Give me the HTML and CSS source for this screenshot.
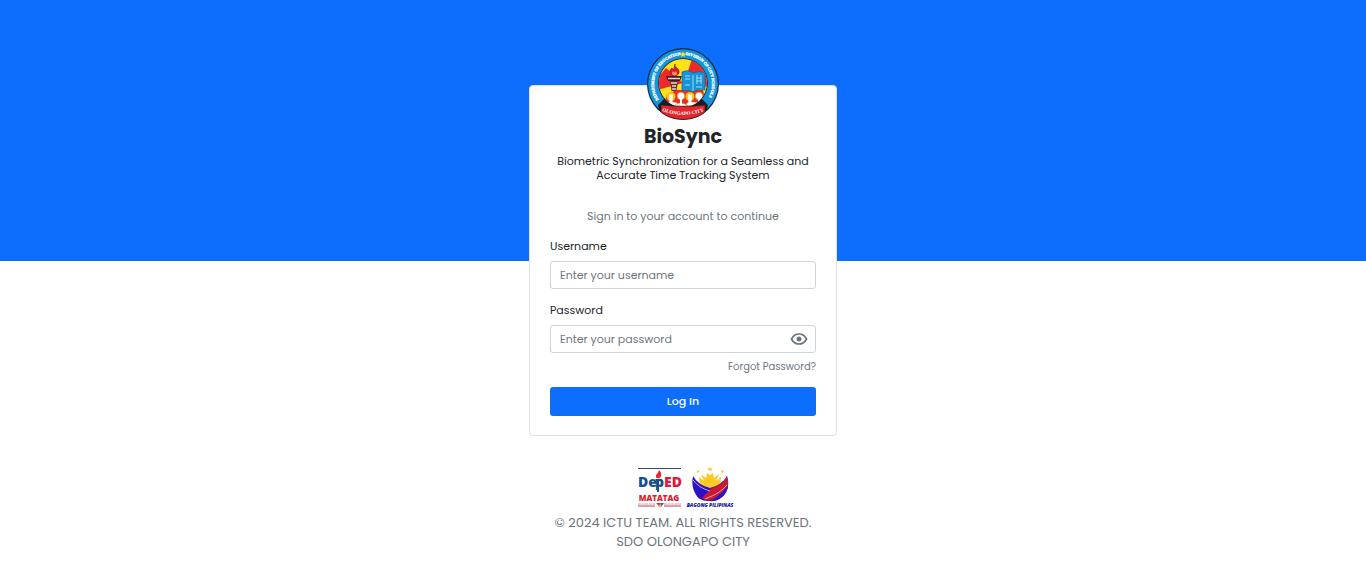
FILE: index.html
```html
<!DOCTYPE html>
<html lang="en">
<head>
<meta charset="utf-8">
<meta name="viewport" content="width=device-width, initial-scale=1">
<title>BioSync</title>
<link rel="stylesheet" href="styles.css">
</head>
<body>
<main class="page">
  <section class="card">
    <svg class="seal" viewBox="0 0 72 72" role="img" aria-label="Division of City Schools, Olongapo City">
      <defs>
        <path id="ring-left" d="M16 57A29 29 0 0 1 33.500 7.100"/>
        <path id="ring-right" d="M38.500 7.100A29 29 0 0 1 56 57"/>
        <path id="ring-bottom" d="M15 63Q36 71 57 63"/>
        <clipPath id="seal-inner"><circle cx="36" cy="35" r="24"/></clipPath>
      </defs>
      <circle cx="36" cy="36" r="36" fill="#102a3c"/>
      <circle cx="36" cy="36" r="34.800" fill="#1594dc"/>
      <path d="M11 57L18 50H54L61 57L60 62L52 68Q36 74 20 68L12 62Z" fill="#15202a"/>
      <circle cx="36" cy="35" r="24.800" fill="#123"/>
      <g clip-path="url(#seal-inner)">
        <path d="M0 0H72V72H0Z" fill="#ffe21a"/>
        <path d="M37 35L46 8H66V40Z" fill="#f0282d"/>
        <path d="M36 35L19 20L10 31V42Z" fill="#f0282d"/>
        <path d="M20 46L30 42L56 42L60 60H16Z" fill="#f0282d"/>
        <path d="M28 16C27 20 33 20 32 25Q30 29 26 28C21 26 23 21 25 20Q26 22 27 21Z" fill="#e5172b" stroke="#7e1820" stroke-width=".6"/>
        <path d="M26 27Q24 25 26 23Q27 26 29 23Q31 27 28 27.500Z" fill="#ff9a80"/>
        <path d="M19 28H35L33 33H21Z" fill="#342022"/>
        <path d="M23 33H31L29.500 43H24.500Z" fill="#6b302d"/>
        <path d="M21 30.500H33M24 35H30M25 38H29M25 41H29" stroke="#f5d3c6" stroke-width="1.500"/>
        <path d="M35 24Q41 21 46 25Q52 22 58 25V42Q51 40 46 44Q41 41 35 43Z" fill="#1595d8" stroke="#126398" stroke-width=".7"/>
        <path d="M38 28H43M38 31H43M38 37H43M49 30H55M49 33H55M50 27V36M54 27V36M49 39H55M46 27V43" stroke="#9bdcf5" stroke-width="1"/>
        <g stroke="#c77918" stroke-width=".5">
          <path d="M17 58Q17 54 22 54H27Q31 54 32 58ZM39 58Q39 54 43 54H47Q52 54 53 58Z" fill="#fff"/>
          <path d="M27 58Q29 55 33 55Q38 55 41 58Z" fill="#fff"/>
        </g>
        <g fill="#f4c80f"><circle cx="24" cy="48.500" r="4.500"/><circle cx="43" cy="48.500" r="4.500"/></g>
        <g fill="#fff" stroke="#d58b19" stroke-width=".7"><circle cx="34" cy="48" r="3.800"/><circle cx="52" cy="48" r="3.800"/></g>
        <path d="M22 46.500H26L25.500 55H22.500ZM41 46.500H45L44.500 55H41.500ZM33 51H35V56H33ZM51 51H53V56H51Z" fill="#fff"/>
      </g>
      <path d="M14 57Q36 60 58 57L58 64Q50 71 36 71.500Q22 71 14 64Z" fill="#e3262c" stroke="#31151a" stroke-width=".6"/>
      <path d="M36 3.200L36.900 5.300L39 5.500L37.400 6.900L38 9.100L36 7.900L34 9.100L34.600 6.900L33 5.500L35.100 5.300Z" fill="#ffe21a"/>
      <text class="seal-text"><textPath href="#ring-left" startOffset="100%" text-anchor="end">DEPARTMENT OF EDUCATION</textPath></text>
      <text class="seal-text"><textPath href="#ring-right">DIVISION OF CITY SCHOOLS</textPath></text>
      <text class="seal-city"><textPath href="#ring-bottom" startOffset="50%" text-anchor="middle">OLONGAPO CITY</textPath></text>
    </svg>
    <h1 class="title">BioSync</h1>
    <p class="subtitle">Biometric Synchronization for a Seamless and Accurate Time Tracking System</p>
    <p class="prompt">Sign in to your account to continue</p>
    <form class="form">
      <div class="field">
        <label class="label" for="username">Username</label>
        <input class="input" id="username" type="text" placeholder="Enter your username">
      </div>
      <div class="field">
        <label class="label" for="password">Password</label>
        <div class="password">
          <input class="input" id="password" type="password" placeholder="Enter your password">
          <button class="reveal" type="button" aria-label="Show password">
            <svg viewBox="0 0 18 14" width="18" height="14"><path d="M1.500 7C3.200 3.600 6 2 9 2S14.800 3.600 16.500 7C14.800 10.400 12 12 9 12S3.200 10.400 1.500 7Z" fill="none" stroke="#6c757d" stroke-width="1.700"/><circle cx="9" cy="7" r="2.500" fill="#6c757d"/></svg>
          </button>
        </div>
      </div>
      <a class="forgot" href="#">Forgot Password?</a>
      <button class="submit" type="submit">Log In</button>
    </form>
  </section>
  <footer class="footer">
    <div class="logos">
      <svg viewBox="0 0 44 42" width="44" height="42" role="img" aria-label="DepEd Matatag">
        <path d="M0 1.500H43" stroke="#2b4c7b" stroke-width="1.200"/>
        <text x="0" y="20" class="deped" fill="#14508f">De</text>
        <text x="17" y="20" class="deped" fill="#14508f">p</text>
        <text x="26" y="20" class="deped" fill="#dc1c38">ED</text>
        <path d="M21 3Q25 7 22 11Q17 12 18 8Q20 7 21 3Z" fill="#e42837"/>
        <path d="M17 12H24L22 14H19ZM19 13H21V25H19Z" fill="#14508f"/>
        <text x="21" y="34" text-anchor="middle" class="matatag" fill="#dc1c30">MATATAG</text>
        <path d="M0 37H17M26 37H43" stroke="#8294ac" stroke-width=".8" stroke-dasharray="3 .6"/>
        <path d="M0 39H17M26 39H43" stroke="#dc3444" stroke-width="1"/>
        <path d="M18 36H22V40Z" fill="#df3344"/><path d="M22 36H26L23 40Z" fill="#2864a7"/><circle cx="22" cy="39" r="1.500" fill="#f3b43b"/>
      </svg>
      <svg class="bagong-logo" viewBox="0 0 44 42" width="44" height="42" role="img" aria-label="Bagong Pilipinas">
        <path d="M11 10L16 14L13 7L18 11L19 6L22 8L25 6L26 11L31 7L28 14L33 10L32 22L22 24L12 22Z" fill="#ffc928"/>
        <path d="M22 0L23 1.500H25L23.500 2.500L24 4L22 3L20 4L20.500 2.500L19 1.500H21ZM9 4L11 3V5L9 6ZM34 3L36 4L35 6L33 5Z" fill="#f8c52b"/>
        <path d="M5 9Q10 18 22 21Q34 18 39 9Q43 22 35 29Q28 35 22 34Q11 35 7 26Q3 19 5 9Z" fill="#2c12c4"/>
        <path d="M39 9Q36 17 23 21.500Q20 25 14 31Q22 36 32 31Q43 24 39 9Z" fill="#c91932"/>
        <path d="M22 34Q31 30 40 18L37 27Q31 35 22 34Z" fill="#2c12c4"/>
        <path d="M5 13Q11 21 22 24M39 18Q33 26 17 32" stroke="#f0e4f3" stroke-width=".7" fill="none"/>
        <text x="22" y="39.500" text-anchor="middle" class="bagong">BAGONG PILIPINAS</text>
      </svg>
    </div>
    <p class="copyright">© 2024 ICTU TEAM. ALL RIGHTS RESERVED.<br>SDO OLONGAPO CITY</p>
  </footer>
</main>
</body>
</html>
```
FILE: styles.css
```css
* { box-sizing: border-box; }
body {
  margin: 0;
  font-family: Poppins, Inter, sans-serif;
  font-size: 11px;
  color: #212529;
  background: #fff linear-gradient(#0d6efd, #0d6efd) 0 0 / 100% 261px no-repeat;
}
h1, p { margin: 0; }
button, input { font: inherit; }
.page {
  display: flex;
  flex-direction: column;
  align-items: center;
  padding: 85px 16px 8px;
}
.card {
  display: flex;
  flex-direction: column;
  width: 100%;
  max-width: 308px;
  padding: 0 20px 19px;
  background: #fff;
  border: 1px solid #dee2e6;
  border-radius: 4px;
}
.seal {
  align-self: center;
  width: 72px;
  height: 72px;
  margin-top: -38px;
}
.seal-text, .seal-city {
  font-family: "Liberation Serif", serif;
  font-weight: 700;
  fill: #fff;
}
.seal-text {
  font-size: 4px;
  stroke: #fff;
  stroke-width: .3px;
}
.seal-city { font-size: 5px; }
.title {
  margin-top: 5px;
  font-size: 19px;
  font-weight: 700;
  line-height: 24px;
  text-align: center;
}
.subtitle {
  margin-top: 5px;
  line-height: 14px;
  text-align: center;
}
.prompt {
  margin-top: 25px;
  line-height: 18px;
  text-align: center;
  color: #6c757d;
}
.form { display: flex; flex-direction: column; }
.field {
  display: flex;
  flex-direction: column;
  gap: 6px;
  margin-top: 12px;
}
.label { line-height: 18px; }
.input {
  width: 100%;
  height: 28px;
  padding: 0 9px;
  color: #212529;
  background: #fff;
  border: 1px solid #ced4da;
  border-radius: 3px;
}
.input::placeholder { color: #6c757d; opacity: 1; }
.password { position: relative; display: flex; }
.password .input { padding-right: 32px; }
.reveal {
  position: absolute;
  top: 0;
  right: 8px;
  display: flex;
  align-items: center;
  height: 27px;
  padding: 0;
  background: none;
  border: 0;
}
.forgot {
  align-self: flex-end;
  margin-top: 6px;
  font-size: 10px;
  line-height: 16px;
  color: #6c757d;
  text-decoration: none;
}
.submit {
  height: 29px;
  margin-top: 12px;
  padding: 0;
  font-weight: 500;
  color: #fff;
  background: #0d6efd;
  border: 0;
  border-radius: 3px;
}
.footer { margin-top: 31px; text-align: center; }
.logos {
  display: flex;
  justify-content: center;
  gap: 6px;
  padding-left: 4px;
}
.deped, .matatag, .bagong {
  font-family: "Open Sans", sans-serif;
  font-weight: 800;
}
.deped { font-size: 14px; }
.matatag { font-size: 8px; }
.bagong-logo { overflow: visible; }
.bagong { font-size: 5px; font-style: italic; fill: #17178c; }
.copyright {
  margin-top: 4px;
  font-size: 13px;
  line-height: 19px;
  color: #6c757d;
}
```
